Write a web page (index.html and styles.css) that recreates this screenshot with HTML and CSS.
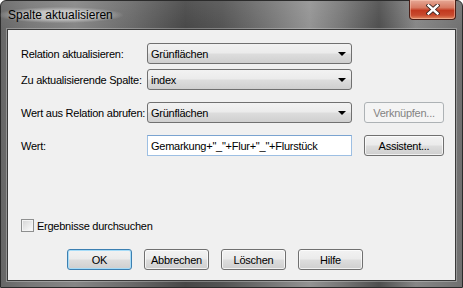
FILE: index.html
```html
<!DOCTYPE html>
<html lang="de">
<head>
    <meta charset="UTF-8">
    <title>Spalte aktualisieren</title>
    <link rel="stylesheet" href="styles.css">
</head>
<body>
<div class="window">
    <div class="titlebar">
        <span class="title">Spalte aktualisieren</span>
        <button class="close">
            <svg width="14" height="11" viewBox="0 0 14 11">
                <path d="M2.5 1.5 L11.5 9.5 M11.5 1.5 L2.5 9.5" stroke="#3a2420" stroke-width="4.2" stroke-linecap="square"/>
                <path d="M2.5 1.5 L11.5 9.5 M11.5 1.5 L2.5 9.5" stroke="#ffffff" stroke-width="2.4" stroke-linecap="square"/>
            </svg>
        </button>
    </div>

    <div class="client">
        <div class="row">
            <span class="label">Relation aktualisieren:</span>
            <div class="select">Grünflächen<span class="arrow"></span></div>
        </div>
        <div class="row">
            <span class="label">Zu aktualisierende Spalte:</span>
            <div class="select">index<span class="arrow"></span></div>
        </div>
        <div class="row spaced">
            <span class="label">Wert aus Relation abrufen:</span>
            <div class="select">Grünflächen<span class="arrow"></span></div>
            <button class="btn side" disabled>Verknüpfen...</button>
        </div>
        <div class="row spaced">
            <span class="label">Wert:</span>
            <input class="text" type="text" value="Gemarkung+&quot;_&quot;+Flur+&quot;_&quot;+Flurstück">
            <button class="btn side">Assistent...</button>
        </div>

        <label class="check"><span class="box"></span>Ergebnisse durchsuchen</label>

        <div class="actions">
            <button class="btn default">OK</button>
            <button class="btn">Abbrechen</button>
            <button class="btn">Löschen</button>
            <button class="btn">Hilfe</button>
        </div>
    </div>
</div>
</body>
</html>
```

FILE: styles.css
```css
body {
    margin: 0;
    font-family: "Liberation Sans", Arial, sans-serif;
    font-size: 11px;
    letter-spacing: -0.25px;
    color: #000;
}

.window {
    width: 463px;
    height: 288px;
    box-sizing: border-box;
    display: flex;
    flex-direction: column;
    border: 1px solid #2b2b2b;
    border-radius: 6px 6px 0 0;
    background:
        linear-gradient(180deg, rgba(255, 255, 255, 0.08) 0, rgba(255, 255, 255, 0) 30px),
        linear-gradient(90deg, #666 0%, #777 6%, #868686 16%, #6a6a6a 28%, #474747 40%, #535353 48%, #747474 58%, #939393 67%, #767676 74%, #4e4e4e 82%, #868686 90%, #707070 100%);
}

.titlebar {
    height: 28px;
    flex: none;
    display: flex;
    justify-content: space-between;
    align-items: flex-start;
}

.title {
    margin: 6px 0 0 -3px;
    padding: 0 10px;
    font-size: 12px;
    line-height: 16px;
    letter-spacing: 0;
    color: #000;
    background: radial-gradient(ellipse at center, rgba(225, 225, 225, 0.7) 35%, rgba(225, 225, 225, 0) 72%);
}

.close {
    width: 47px;
    height: 20px;
    margin: -1px 6px 0 0;
    padding: 0;
    display: flex;
    align-items: center;
    justify-content: center;
    border: 1px solid #4a1e16;
    border-top: none;
    border-radius: 0 0 4px 4px;
    background: linear-gradient(180deg, #e6a896 0%, #d77a62 40%, #c2391f 55%, #c84a2e 80%, #e08a62 100%);
    box-shadow: inset 0 0 0 1px rgba(255, 210, 190, 0.45);
}

.client {
    flex: 1;
    margin: 0 6px 6px 6px;
    border: 1px solid #3a3a3a;
    box-shadow: 0 0 0 1px rgba(220, 220, 220, 0.35);
    background: #f0f0f0;
    padding: 13px 0 0 13px;
    display: flex;
    flex-direction: column;
}

.row {
    display: flex;
    align-items: center;
    height: 21px;
}

.row + .row {
    margin-top: 5px;
}

.row.spaced {
    margin-top: 12px;
}

.label {
    width: 126px;
    flex: none;
    white-space: nowrap;
}

.select {
    width: 205px;
    height: 21px;
    box-sizing: border-box;
    display: flex;
    align-items: center;
    justify-content: space-between;
    padding: 0 5px 0 3px;
    border: 1px solid #707070;
    border-radius: 3px;
    background: linear-gradient(180deg, #f2f2f2 0%, #ebebeb 48%, #dddddd 52%, #cfcfcf 100%);
}

.arrow {
    width: 0;
    height: 0;
    border-left: 4px solid transparent;
    border-right: 4px solid transparent;
    border-top: 4px solid #000;
    margin-top: 1px;
}

.text {
    width: 205px;
    height: 21px;
    box-sizing: border-box;
    margin: 0;
    padding: 0 0 0 3px;
    font-family: inherit;
    font-size: 11px;
    letter-spacing: -0.25px;
    color: #000;
    background: #fff;
    border: 1px solid #9dbfe3;
    border-top-color: #7aa3d0;
    outline: none;
}

.btn {
    width: 65px;
    height: 21px;
    box-sizing: border-box;
    padding: 0;
    font-family: inherit;
    font-size: 11px;
    letter-spacing: -0.25px;
    color: #000;
    border: 1px solid #707070;
    border-radius: 3px;
    background: linear-gradient(180deg, #f2f2f2 0%, #ebebeb 48%, #dddddd 52%, #cfcfcf 100%);
    box-shadow: inset 0 0 0 1px rgba(255, 255, 255, 0.7);
}

.btn.side {
    width: 80px;
    margin-left: 12px;
}

.btn:disabled {
    color: #838383;
    border-color: #adb2b5;
    background: #f4f4f4;
    box-shadow: none;
}

.btn.default {
    border-color: #3c7fb1;
    box-shadow: inset 0 0 0 1px #a6dcf8;
}

.check {
    display: flex;
    align-items: center;
    margin-top: 63px;
    height: 13px;
}

.box {
    width: 13px;
    height: 13px;
    box-sizing: border-box;
    margin-right: 3px;
    border: 1px solid #8e8f8f;
    background: linear-gradient(135deg, #d4d4d4 0%, #efefef 65%, #ffffff 100%);
    box-shadow: inset 0 0 0 1px #f4f4f4;
}

.actions {
    display: flex;
    gap: 12px;
    margin: 17px 0 0 46px;
}
```
